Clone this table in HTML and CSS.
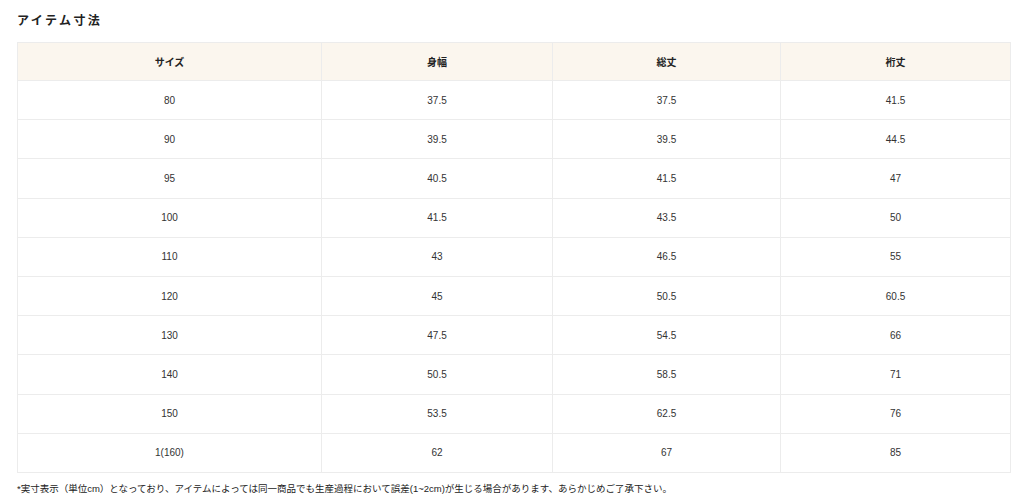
FILE: index.html
```html
<!DOCTYPE html>
<html lang="ja">
<head>
<meta charset="utf-8">
<link rel="stylesheet" href="styles.css">
</head>
<body>
<div class="page">
  <h2 class="title">アイテム寸法</h2>
  <table class="size-table">
    <colgroup>
      <col class="c1"><col class="c2"><col class="c3"><col class="c4">
    </colgroup>
    <thead>
      <tr><th>サイズ</th><th>身幅</th><th>総丈</th><th>裄丈</th></tr>
    </thead>
    <tbody>
      <tr><td>80</td><td>37.5</td><td>37.5</td><td>41.5</td></tr>
      <tr><td>90</td><td>39.5</td><td>39.5</td><td>44.5</td></tr>
      <tr><td>95</td><td>40.5</td><td>41.5</td><td>47</td></tr>
      <tr><td>100</td><td>41.5</td><td>43.5</td><td>50</td></tr>
      <tr><td>110</td><td>43</td><td>46.5</td><td>55</td></tr>
      <tr><td>120</td><td>45</td><td>50.5</td><td>60.5</td></tr>
      <tr><td>130</td><td>47.5</td><td>54.5</td><td>66</td></tr>
      <tr><td>140</td><td>50.5</td><td>58.5</td><td>71</td></tr>
      <tr><td>150</td><td>53.5</td><td>62.5</td><td>76</td></tr>
      <tr><td>1(160)</td><td>62</td><td>67</td><td>85</td></tr>
    </tbody>
  </table>
  <p class="note">*実寸表示（単位cm）となっており、アイテムによっては同一商品でも生産過程において誤差(1~2cm)が生じる場合があります、あらかじめご了承下さい。</p>
</div>
</body>
</html>
```

FILE: styles.css
```css
html, body {
  margin: 0;
  padding: 0;
  background: #ffffff;
}
body {
  font-family: "Liberation Sans", "Noto Sans CJK JP", sans-serif;
  color: #333333;
}
.page {
  padding: 12px 14px 0 17px;
}
.title {
  margin: 0 0 14px 0;
  font-family: "Noto Sans CJK JP", sans-serif;
  font-size: 12px;
  font-weight: 700;
  letter-spacing: 2.4px;
  line-height: 16px;
  color: #222222;
}
.size-table {
  width: 993px;
  border-collapse: collapse;
  table-layout: fixed;
}
.c1 { width: 304px; }
.c2 { width: 231px; }
.c3 { width: 228px; }
.c4 { width: 230px; }
.size-table th,
.size-table td {
  border: 1px solid #ececec;
  text-align: center;
  vertical-align: middle;
  padding: 0;
}
.size-table th {
  height: 37px;
  background: #fbf6ee;
  font-family: "Noto Sans CJK JP", sans-serif;
  font-size: 10px;
  font-weight: 700;
  color: #222222;
}
.size-table td {
  height: 38.2px;
  font-size: 10px;
  color: #333333;
}
.note {
  margin: 9px 0 0 0;
  font-family: "Liberation Sans", "Noto Sans CJK JP", sans-serif;
  font-size: 9.5px;
  line-height: 14px;
  color: #222222;
}
```
